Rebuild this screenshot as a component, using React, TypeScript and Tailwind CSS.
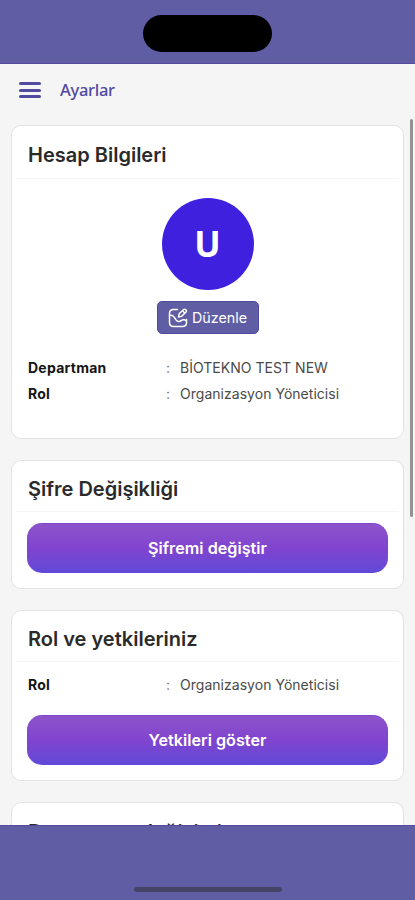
import React from "react";

const InfoRow: React.FC<{ label: string; value: string }> = ({ label, value }) => (
  <div className="flex h-[26px] items-center text-[14px] text-[#4a4a4a]">
    <span className="w-[138px] pl-px font-bold tracking-[0.25px] text-[#151515]">{label}</span>
    <span className="w-[15px] pl-px text-[#777]">:</span>
    <span className="whitespace-nowrap tracking-[0.03px]">{value}</span>
  </div>
);

type CardProps = {
  title: string;
  className: string;
  headClassName?: string;
  children?: React.ReactNode;
};

const Card: React.FC<CardProps> = ({ title, className, headClassName = "h-[51px]", children }) => (
  <section className={`shrink-0 rounded-[10px] border border-[#e3e3e3] bg-white ${className}`}>
    <div className={`mx-1 flex items-center border-b border-[#f5f5f5] px-3 pt-1.5 ${headClassName}`}>
      <h2 className="text-[20px] font-semibold leading-7 whitespace-nowrap text-[#2a2a2a]">{title}</h2>
    </div>
    <div className="px-[15px]">{children}</div>
  </section>
);

const GradientButton: React.FC<{ children: React.ReactNode }> = ({ children }) => (
  <button
    type="button"
    className="flex h-[50px] w-full items-center justify-center rounded-[15px] border border-[#8247c9] border-b-[#6548d8] bg-linear-to-b from-[#8c54ca] via-[#8144cf] to-[#6049d7] text-[16.2px] font-semibold text-white"
  >
    {children}
  </button>
);

const EditIcon: React.FC = () => (
  <svg width="20" height="20" viewBox="0 0 20 20" fill="none" stroke="currentColor" strokeWidth="1.5" strokeLinecap="round" strokeLinejoin="round">
    <path d="M9.5 1.5H5.5Q1.5 1.5 1.5 5.5v9Q1.5 18.5 5.5 18.5h9Q18.5 18.5 18.5 14.5v-3" />
    <path d="m10.5 9 .7-3.2L15.6 1.5q1-.8 2.2.3t.2 2.2L13.7 8.3 10.5 9ZM14.5 2.8l2.2 2.2" />
    <path d="M1.8 7.5q2.6-.6 4.2 1.5l2.4 3.4q1.3 1.8 3.5.8l2.5-1.2q2-.8 3.8.6" />
  </svg>
);

export default function App() {
  return (
    <div className="flex h-[900px] w-[415px] flex-col overflow-hidden bg-[#f5f5f5] font-['Inter',sans-serif]">
      <div className="flex h-16 shrink-0 justify-center border-b border-[#544b9d] bg-[#5f5da3] pt-[15px]">
        <div className="h-[37px] w-[129px] rounded-full bg-black" />
      </div>

      <header className="flex h-[55px] shrink-0 items-center gap-[19px] pb-[3px] pl-[19px] text-[#5149a0]">
        <button type="button" aria-label="Menu" className="flex w-[22px] flex-col gap-[3.5px]">
          <span className="h-[3px] rounded-full bg-[#514a9f]" />
          <span className="h-[3px] rounded-full bg-[#514a9f]" />
          <span className="h-[3px] rounded-full bg-[#514a9f]" />
        </button>
        <h1 className="pt-px font-['Noto_Sans',sans-serif] text-[16.5px] font-medium tracking-[-0.3px]">Ayarlar</h1>
      </header>

      <main className="relative flex min-h-0 flex-1 flex-col gap-[21px] overflow-hidden px-[11px] pt-[6px]">
        <Card title="Hesap Bilgileri" className="h-[314px]" headClassName="h-[53px]">
          <div className="flex flex-col items-center pt-[19px]">
            <div className="flex size-[92px] items-center justify-center rounded-full bg-[#3f20df] font-['Noto_Sans',sans-serif] text-[35px] font-bold text-white">
              U
            </div>
            <button
              type="button"
              className="mt-[11px] flex h-[33px] w-[102px] items-center justify-center gap-1 rounded-[5px] border border-[#5049a0] bg-[#5f5da3] text-[14.3px] text-white"
            >
              <EditIcon />
              <span className="pt-px">Düzenle</span>
            </button>
          </div>
          <div className="pt-[20px]">
            <InfoRow label="Departman" value="BİOTEKNO TEST NEW" />
            <InfoRow label="Rol" value="Organizasyon Yöneticisi" />
          </div>
        </Card>

        <Card title="Şifre Değişikliği" className="h-[129px]">
          <div className="pt-[11px]">
            <GradientButton>Şifremi değiştir</GradientButton>
          </div>
        </Card>

        <Card title="Rol ve yetkileriniz" className="h-[171px]">
          <div className="pt-[9px] pb-[18px]">
            <InfoRow label="Rol" value="Organizasyon Yöneticisi" />
          </div>
          <GradientButton>Yetkileri göster</GradientButton>
        </Card>

        <Card title="Departman değişimi" className="h-[129px]" headClassName="h-[53px]" />

        <div className="absolute top-0 right-[2px] h-[398px] w-[3px] rounded-full bg-[#929292]" />
      </main>

      <footer className="flex h-[75px] shrink-0 items-end justify-center border-t border-[#544b9d] bg-[#5f5da3] pb-[8px]">
        <div className="h-[5px] w-[148px] rounded-full bg-[#454466]" />
      </footer>
    </div>
  );
}
